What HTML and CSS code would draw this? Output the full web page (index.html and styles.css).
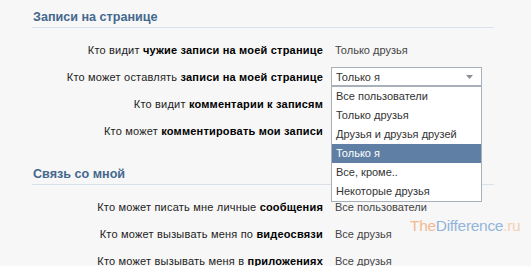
FILE: index.html
```html
<!DOCTYPE html>
<html lang="ru">
<head>
    <meta charset="UTF-8">
    <title>Приватность</title>
    <link rel="stylesheet" href="styles.css">
</head>
<body>
    <div class="page">
        <div class="section">
            <div class="section-title">Записи на странице</div>
            <div class="rows">
                <div class="row">
                    <div class="label">Кто видит <b>чужие записи на моей странице</b></div>
                    <div class="value">Только друзья</div>
                </div>
                <div class="row">
                    <div class="label">Кто может оставлять <b>записи на моей странице</b></div>
                    <div class="value">
                        <div class="select">
                            <span>Только я</span>
                            <svg class="arrow" width="7" height="4" viewBox="0 0 7 4"><path d="M0 0h7L3.5 4z" fill="#8a8f96"/></svg>
                            <ul class="options">
                                <li>Все пользователи</li>
                                <li>Только друзья</li>
                                <li>Друзья и друзья друзей</li>
                                <li class="active">Только я</li>
                                <li>Все, кроме..</li>
                                <li>Некоторые друзья</li>
                            </ul>
                        </div>
                    </div>
                </div>
                <div class="row">
                    <div class="label">Кто видит <b>комментарии к записям</b></div>
                    <div class="value"></div>
                </div>
                <div class="row">
                    <div class="label">Кто может <b>комментировать мои записи</b></div>
                    <div class="value"></div>
                </div>
            </div>
        </div>

        <div class="section second">
            <div class="section-title">Связь со мной</div>
            <div class="rows">
                <div class="row">
                    <div class="label">Кто может писать мне личные <b>сообщения</b></div>
                    <div class="value">Все пользователи</div>
                </div>
                <div class="row">
                    <div class="label">Кто может вызывать меня по <b>видеосвязи</b></div>
                    <div class="value">Все друзья</div>
                </div>
                <div class="row">
                    <div class="label">Кто может вызывать меня в <b>приложениях</b></div>
                    <div class="value">Все друзья</div>
                </div>
            </div>
        </div>

        <div class="watermark"><span class="wm-the">The</span><span class="wm-diff">Difference</span><span class="wm-ru">.ru</span></div>
    </div>
</body>
</html>
```

FILE: styles.css
```css
body {
    margin: 0;
    background: #f7f7f7;
    font-family: "Liberation Sans", Arial, sans-serif;
    font-size: 11px;
    color: #222;
    overflow: hidden;
}
.page {
    position: relative;
    height: 266px;
    padding: 9px 0 0 32px;
    box-sizing: border-box;
}
.section {
    width: 462px;
}
.section-title {
    font-size: 12.6px;
    font-weight: bold;
    line-height: 16px;
    color: #45688e;
    padding: 0 0 2px 1px;
    border-bottom: 1px solid #dae1e8;
}
.second {
    margin-top: 22px;
}
.rows {
    padding-top: 8px;
}
.row {
    display: grid;
    grid-template-columns: 291px 1fr;
    column-gap: 8px;
    height: 27px;
    align-items: center;
}
.label {
    text-align: right;
    color: #222;
    letter-spacing: 0.2px;
    white-space: nowrap;
}
.label b {
    color: #000;
}
.value {
    color: #444;
    padding-left: 4px;
}
.select {
    position: relative;
    width: 151px;
    height: 19px;
    margin-left: -4px;
    box-sizing: border-box;
    border: 1px solid #a8b0ba;
    background: #fff;
    display: flex;
    align-items: center;
    justify-content: space-between;
    padding: 0 8px 0 4px;
    color: #333;
}
.options {
    position: absolute;
    left: -1px;
    top: 18px;
    width: 151px;
    box-sizing: border-box;
    margin: 0;
    padding: 0;
    list-style: none;
    background: #fff;
    border: 1px solid #a8b0ba;
    z-index: 2;
}
.options li {
    height: 19px;
    line-height: 19px;
    padding-left: 4px;
    color: #333;
}
.options li.active {
    background: #5f7fa5;
    color: #fff;
}
.watermark {
    position: absolute;
    left: 410px;
    top: 217px;
    font-family: "Liberation Sans", Arial, sans-serif;
    font-size: 15.5px;
    letter-spacing: -0.3px;
    white-space: nowrap;
    opacity: 0.55;
}
.wm-the { color: #f08a3c; }
.wm-diff { color: #3f7fc4; }
.wm-ru { color: #f4b27a; }
```
